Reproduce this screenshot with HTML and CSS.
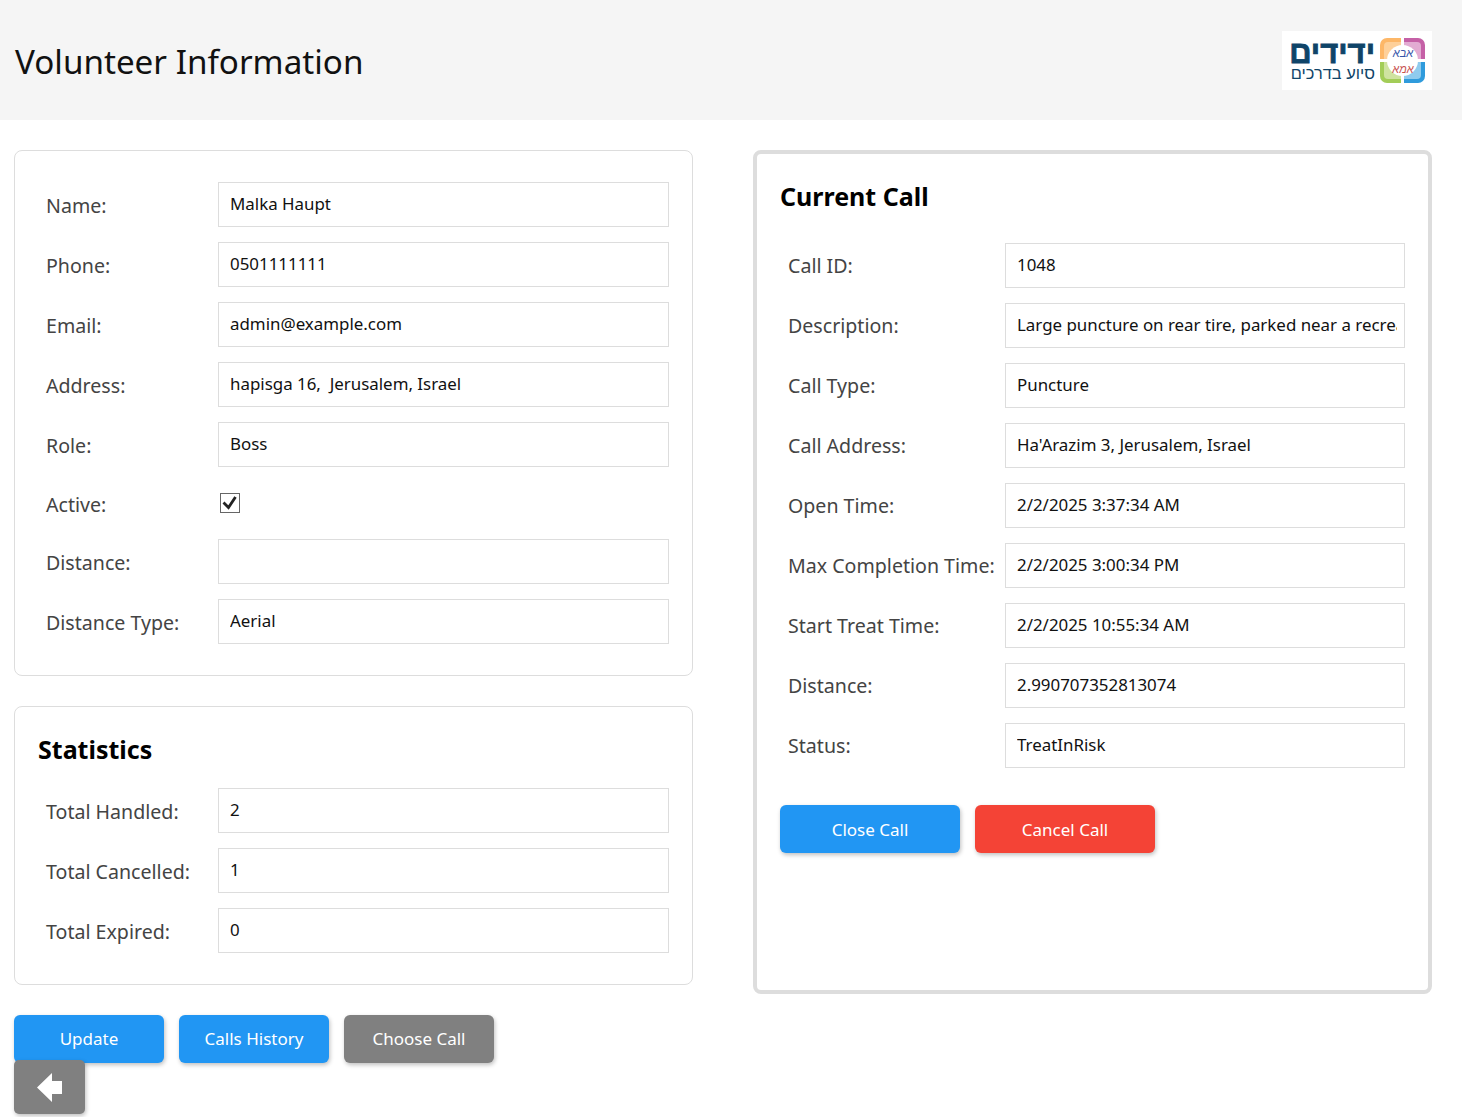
FILE: index.html
```html
<!DOCTYPE html>
<html lang="en">
<head>
  <meta charset="UTF-8">
  <title>Volunteer Information</title>
  <link rel="stylesheet" href="styles.css">
</head>
<body>

  <header class="top-bar">
    <h1>Volunteer Information</h1>
    <div class="logo">
      <div class="logo-text" lang="he" dir="rtl">
        <span class="logo-name">ידידים</span>
        <span class="logo-sub">סיוע בדרכים</span>
      </div>
      <svg class="logo-mark" width="45" height="45" viewBox="0 0 45 45">
        <path d="M21 0H7a7 7 0 0 0-7 7v14h21z" fill="#fdb768"/>
        <path d="M24 0h14a7 7 0 0 1 7 7v14H24z" fill="#c560a6"/>
        <path d="M21 45H7a7 7 0 0 1-7-7V24h21z" fill="#a3cd58"/>
        <path d="M24 45h14a7 7 0 0 0 7-7V24H24z" fill="#2f9bdc"/>
        <path d="M21 4H8a4 4 0 0 0-4 4v13h17z" fill="#fed09a"/>
        <path d="M24 4h13a4 4 0 0 1 4 4v13H24z" fill="#e2abd2"/>
        <path d="M21 41H8a4 4 0 0 1-4-4V24h17z" fill="#cfe3a0"/>
        <path d="M24 41h13a4 4 0 0 0 4-4V24H24z" fill="#8fcbee"/>
        <circle cx="22.5" cy="22.5" r="15.5" fill="#fff"/>
        <text class="logo-word" x="23" y="19" fill="#3654a8" text-anchor="middle">אבא</text>
        <text class="logo-word" x="23" y="35" fill="#c8524f" text-anchor="middle">אמא</text>
      </svg>
    </div>
  </header>

  <main class="page">
    <div class="left-col">
      <section class="card">
        <div class="form-row"><label>Name:</label><input value="Malka Haupt" readonly></div>
        <div class="form-row"><label>Phone:</label><input value="0501111111" readonly></div>
        <div class="form-row"><label>Email:</label><input value="admin@example.com" readonly></div>
        <div class="form-row"><label>Address:</label><input value="hapisga 16,  Jerusalem, Israel" readonly></div>
        <div class="form-row"><label>Role:</label><input value="Boss" readonly></div>
        <div class="form-row check-row">
          <label>Active:</label>
          <span class="check-box">
            <svg width="18" height="18" viewBox="0 0 18 18"><path d="M2.5 8.5 7.5 13.5 14.5 3" fill="none" stroke="#222" stroke-width="2.8"/></svg>
          </span>
        </div>
        <div class="form-row"><label>Distance:</label><input value="" readonly></div>
        <div class="form-row"><label>Distance Type:</label><input value="Aerial" readonly></div>
      </section>

      <section class="card stats-card">
        <h2>Statistics</h2>
        <div class="form-row"><label>Total Handled:</label><input value="2" readonly></div>
        <div class="form-row"><label>Total Cancelled:</label><input value="1" readonly></div>
        <div class="form-row"><label>Total Expired:</label><input value="0" readonly></div>
      </section>

      <div class="actions">
        <button class="btn blue">Update</button>
        <button class="btn blue">Calls History</button>
        <button class="btn gray">Choose Call</button>
      </div>
      <button class="back-btn" aria-label="Back">
        <svg width="25" height="29" viewBox="0 0 25 29"><path d="M0 14.5 15 0V8H25V21H15V29Z" fill="#fff"/></svg>
      </button>
    </div>

    <section class="call-card">
      <h2>Current Call</h2>
      <div class="form-row"><label>Call ID:</label><input value="1048" readonly></div>
      <div class="form-row"><label>Description:</label><input value="Large puncture on rear tire, parked near a recreational area" readonly></div>
      <div class="form-row"><label>Call Type:</label><input value="Puncture" readonly></div>
      <div class="form-row"><label>Call Address:</label><input value="Ha'Arazim 3, Jerusalem, Israel" readonly></div>
      <div class="form-row"><label>Open Time:</label><input value="2/2/2025 3:37:34 AM" readonly></div>
      <div class="form-row"><label>Max Completion Time:</label><input value="2/2/2025 3:00:34 PM" readonly></div>
      <div class="form-row"><label>Start Treat Time:</label><input value="2/2/2025 10:55:34 AM" readonly></div>
      <div class="form-row"><label>Distance:</label><input value="2.990707352813074" readonly></div>
      <div class="form-row"><label>Status:</label><input value="TreatInRisk" readonly></div>
      <div class="call-actions">
        <button class="btn blue wide">Close Call</button>
        <button class="btn red wide">Cancel Call</button>
      </div>
    </section>
  </main>

</body>
</html>
```

FILE: styles.css
```css
* {
  box-sizing: border-box;
}
body {
  margin: 0;
  font-family: "Noto Sans", sans-serif;
  background-color: #fff;
  height: 1117px;
  overflow: hidden;
}
.top-bar {
  height: 120px;
  padding: 0 30px 0 15px;
  background-color: #f5f5f5;
  display: flex;
  justify-content: space-between;
  align-items: center;
}
h1 {
  margin: 2px 0 0;
  font-size: 33.2px;
  font-weight: 400;
  color: #111;
}
.logo {
  width: 150px;
  height: 59px;
  background-color: #fff;
  display: flex;
  justify-content: flex-end;
  align-items: center;
  gap: 5px;
  padding: 0 7px 0 8px;
}
.logo-mark {
  flex-shrink: 0;
}
.logo-text {
  display: flex;
  flex-direction: column;
  font-family: "Liberation Sans", sans-serif;
  color: #0f4468;
  line-height: 1;
}
.logo-name {
  font-size: 31px;
  font-weight: 700;
  height: 25px;
  line-height: 25px;
  -webkit-text-stroke: 0.8px #0f4468;
}
.logo-sub {
  font-size: 16.4px;
  height: 16px;
  line-height: 16px;
}
.logo-word {
  font-family: "Liberation Sans", sans-serif;
  font-size: 11px;
  font-style: italic;
}
.page {
  display: grid;
  grid-template-columns: 679px 679px;
  gap: 60px;
  padding: 30px 0 0 14px;
  align-items: start;
}
.card {
  border: 1px solid #ddd;
  border-radius: 8px;
  padding: 31px 23px 31px 31px;
  display: flex;
  flex-direction: column;
  gap: 15px;
}
.stats-card {
  margin-top: 30px;
  padding: 23px 23px 31px 31px;
}
.stats-card h2 {
  margin: 0 0 0 -8px;
  height: 43px;
}
h2 {
  font-size: 25px;
  font-weight: 700;
  color: #000;
  line-height: 39px;
}
.form-row {
  display: grid;
  grid-template-columns: 172px 1fr;
  align-items: center;
  height: 45px;
}
.check-row {
  height: 42px;
}
label {
  font-size: 19.6px;
  color: #444;
  padding-top: 2px;
}
input {
  width: 100%;
  height: 45px;
  border: 1px solid #ddd;
  padding: 0 7px 2px 11px;
  font-family: inherit;
  font-size: 16.9px;
  color: #111;
  background-color: #fff;
  outline: none;
}
.check-box {
  width: 20px;
  height: 20px;
  margin-left: 2px;
  border: 1px solid #666;
  display: flex;
  align-items: center;
  justify-content: center;
}
.actions {
  display: flex;
  gap: 15px;
  margin-top: 30px;
}
.btn {
  width: 150px;
  height: 48px;
  border: none;
  border-radius: 6px;
  font-family: inherit;
  font-size: 17px;
  color: #fff;
  box-shadow: 1px 2px 4px rgba(0, 0, 0, 0.25);
}
.actions .btn {
  padding-bottom: 3px;
}
.blue {
  background-color: #2196f3;
}
.gray {
  background-color: #808080;
}
.red {
  background-color: #f44336;
}
.wide {
  width: 180px;
}
.back-btn {
  display: flex;
  align-items: center;
  justify-content: center;
  width: 71px;
  height: 54px;
  margin-top: -3px;
  position: relative;
  border: none;
  border-radius: 5px;
  background-color: #808080;
  box-shadow: 1px 2px 4px rgba(0, 0, 0, 0.25);
}
.call-card {
  height: 844px;
  border: 4px solid #ddd;
  border-radius: 8px;
  padding: 23px 23px 0;
  display: flex;
  flex-direction: column;
  gap: 15px;
}
.call-card h2 {
  margin: 0;
  height: 51px;
}
.call-card label {
  padding-top: 0;
}
.call-card .form-row {
  grid-template-columns: 217px 1fr;
  padding-left: 8px;
}
.call-actions {
  display: flex;
  gap: 15px;
  margin-top: 22px;
}
```
